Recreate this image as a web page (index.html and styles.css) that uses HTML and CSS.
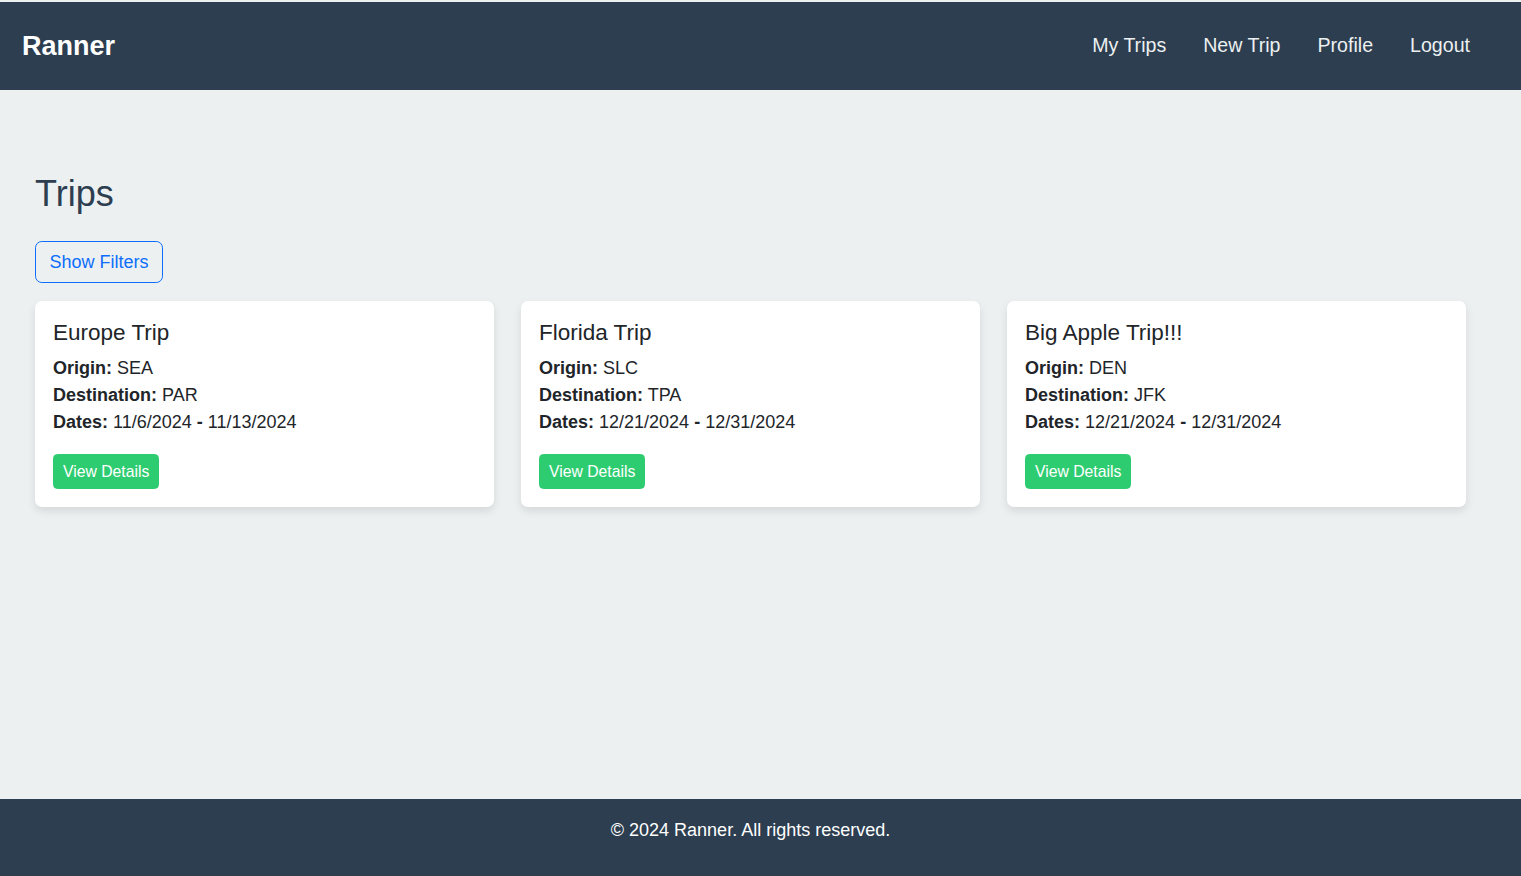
FILE: index.html
```html
<!DOCTYPE html>
<html lang="en">
<head>
<meta charset="utf-8">
<title>Ranner</title>
<link rel="stylesheet" href="styles.css">
</head>
<body>
<div class="page">
  <header class="topbar">
    <a class="brand" href="#">Ranner</a>
    <nav class="nav">
      <a href="#">My Trips</a>
      <a href="#">New Trip</a>
      <a href="#">Profile</a>
      <a href="#">Logout</a>
    </nav>
  </header>
  <main class="main">
    <h2 class="page-title">Trips</h2>
    <button class="btn-outline">Show Filters</button>
    <div class="cards">
      <div class="card">
        <h5 class="card-title">Europe Trip</h5>
        <div class="card-lines">
          <p><strong>Origin:</strong> SEA</p>
          <p><strong>Destination:</strong> PAR</p>
          <p><strong>Dates:</strong> 11/6/2024 <strong>-</strong> 11/13/2024</p>
        </div>
        <a class="btn-green" href="#">View Details</a>
      </div>
      <div class="card">
        <h5 class="card-title">Florida Trip</h5>
        <div class="card-lines">
          <p><strong>Origin:</strong> SLC</p>
          <p><strong>Destination:</strong> TPA</p>
          <p><strong>Dates:</strong> 12/21/2024 <strong>-</strong> 12/31/2024</p>
        </div>
        <a class="btn-green" href="#">View Details</a>
      </div>
      <div class="card">
        <h5 class="card-title">Big Apple Trip!!!</h5>
        <div class="card-lines">
          <p><strong>Origin:</strong> DEN</p>
          <p><strong>Destination:</strong> JFK</p>
          <p><strong>Dates:</strong> 12/21/2024 <strong>-</strong> 12/31/2024</p>
        </div>
        <a class="btn-green" href="#">View Details</a>
      </div>
    </div>
  </main>
  <footer class="footer">
    <p>© 2024 Ranner. All rights reserved.</p>
  </footer>
</div>
</body>
</html>
```

FILE: styles.css
```css
* { box-sizing: border-box; }
html, body { margin: 0; padding: 0; }
body {
  font-family: "Liberation Sans", Arial, sans-serif;
  font-size: 18px;
  line-height: 1.5;
  color: #212529;
  background: #ecf0f1;
}
.page {
  min-height: 876px;
  display: flex;
  flex-direction: column;
  padding-top: 2px;
}
.topbar {
  background: #2c3e50;
  height: 88px;
  display: flex;
  align-items: center;
  justify-content: space-between;
  padding: 0 51px 0 22px;
}
.brand {
  color: #fff;
  font-weight: bold;
  font-size: 27px;
  text-decoration: none;
  line-height: 1;
}
.nav {
  display: flex;
  gap: 37px;
}
.nav a {
  color: #ecf0f1;
  text-decoration: none;
  font-size: 19.6px;
}
.main {
  flex: 1;
  padding: 82px 55px 0 35px;
}
.page-title {
  margin: 0 0 26px;
  font-size: 36px;
  font-weight: 500;
  line-height: 1.2;
  color: #2c3e50;
}
.btn-outline {
  font-family: inherit;
  font-size: 18px;
  line-height: 1.5;
  padding: 6.75px 13.5px;
  color: #0d6efd;
  background: transparent;
  border: 1px solid #0d6efd;
  border-radius: 6.75px;
  height: 42px;
  display: block;
  margin-bottom: 18px;
}
.cards {
  display: grid;
  grid-template-columns: repeat(3, 1fr);
  gap: 27px;
}
.card {
  background: #fff;
  border-radius: 7px;
  padding: 18px;
  box-shadow: 0 4px 8px rgba(0, 0, 0, 0.1);
}
.card-title {
  margin: 0 0 9px;
  font-size: 22.5px;
  font-weight: 500;
  line-height: 1.2;
}
.card-lines { margin-bottom: 18px; }
.card-lines p { margin: 0; }
.btn-green {
  display: inline-block;
  background: #2ecc71;
  color: #fff;
  text-decoration: none;
  font-size: 15.75px;
  line-height: 1.5;
  padding: 4.5px 9px;
  border: 1px solid #2ecc71;
  border-radius: 4.5px;
  height: 35px;
}
.footer {
  background: #2c3e50;
  color: #fff;
  height: 77px;
  padding: 18px 20px 0 0;
  text-align: center;
}
.footer p { margin: 0; }
```
